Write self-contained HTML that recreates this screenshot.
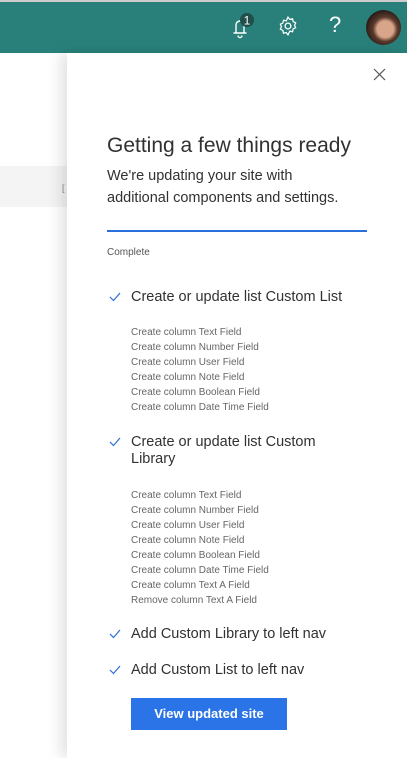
<!DOCTYPE html><html><head><style>
body{margin:0;width:407px;height:758px;overflow:hidden;position:relative;background:#fff;font-family:"Liberation Sans",sans-serif;color:#323130}
.a{position:absolute;white-space:nowrap}
.hd{position:absolute;left:0;top:2px;width:407px;height:51px;background:#29807b}
.s{font-size:10px;color:#666;line-height:15px}
.m{font-size:14.5px;color:#323130}
.ck{position:absolute;width:12px;height:10px}
</style></head><body>
<div class="a" style="left:0;top:0;width:407px;height:2px;background:#ccc"></div>
<div class="hd"></div>
<svg class="a" style="left:230px;top:12px" width="30" height="28" viewBox="0 0 30 28"><path d="M3.5 21h13M6 21v-8a4 4 0 0 1 8 0v8M8 23.5a2 2 0 0 0 4 0" fill="none" stroke="#fff" stroke-width="1.4"/><circle cx="17" cy="8" r="7" fill="#1f4e4b"/><text x="17" y="12.5" font-size="12" fill="#fff" text-anchor="middle" font-family="Liberation Sans">1</text></svg>
<svg class="a" style="left:278px;top:16px" width="20" height="20" viewBox="0 0 18 18"><circle cx="9" cy="9" r="2.6" fill="none" stroke="#fff" stroke-width="1.2"/><path d="M9 1l1.6 2.1 2.5-.6.5 2.5 2.3 1.1-1 2.2 1 2.2-2.3 1.2-.5 2.5-2.5-.6L9 17l-1.6-2.1-2.5.6-.5-2.5-2.3-1.2 1-2.2-1-2.2 2.3-1.1.5-2.5 2.5.6z" fill="none" stroke="#fff" stroke-width="1.1"/></svg>
<div class="a" style="left:329px;top:12px;font-size:22px;color:#fff">?</div>
<div class="a" style="left:366px;top:10px;width:35px;height:35px;border-radius:50%;background:radial-gradient(circle at 55% 55%,#d8a58a 0 30%,#5a3a2c 45%,#2a1d18 70%)"></div>
<div class="a" style="left:0;top:166px;width:67px;height:41px;background:#f4f4f4"></div>
<div class="a" style="left:62px;top:183px;font-size:9px;color:#888">[</div>
<div class="a" style="left:67px;top:53px;width:340px;height:705px;background:#fff;box-shadow:-6px 0 14px rgba(0,0,0,.12)"></div>
<svg class="a" style="left:373px;top:68px" width="13" height="13"><path d="M1 1l11 11M12 1L1 12" stroke="#555" stroke-width="1.2"/></svg>
<div class="a" style="left:107px;top:134px;font-size:21px;color:#323130">Getting a few things ready</div>
<div class="a" style="left:107px;top:166px;font-size:14.5px;line-height:21.5px;color:#323130">We're updating your site with<br>additional components and settings.</div>
<div class="a" style="left:107px;top:230px;width:260px;height:2px;background:#2b6fdc"></div>
<div class="a" style="left:107px;top:247px;font-size:10px;color:#555">Complete</div>

<svg class="ck" style="left:109px;top:292px"><path d="M1 5l3.5 3.5L11 1" fill="none" stroke="#2b6fdc" stroke-width="1.2"/></svg>
<div class="a m" style="left:131px;top:289px">Create or update list Custom List</div>
<div class="a s" style="left:131px;top:325px">Create column Text Field<br>Create column Number Field<br>Create column User Field<br>Create column Note Field<br>Create column Boolean Field<br>Create column Date Time Field</div>

<svg class="ck" style="left:109px;top:437px"><path d="M1 5l3.5 3.5L11 1" fill="none" stroke="#2b6fdc" stroke-width="1.2"/></svg>
<div class="a m" style="left:131px;top:434px;line-height:17px">Create or update list Custom<br>Library</div>
<div class="a s" style="left:131px;top:488px">Create column Text Field<br>Create column Number Field<br>Create column User Field<br>Create column Note Field<br>Create column Boolean Field<br>Create column Date Time Field<br>Create column Text A Field<br>Remove column Text A Field</div>

<svg class="ck" style="left:109px;top:629px"><path d="M1 5l3.5 3.5L11 1" fill="none" stroke="#2b6fdc" stroke-width="1.2"/></svg>
<div class="a m" style="left:131px;top:626px">Add Custom Library to left nav</div>
<svg class="ck" style="left:109px;top:665px"><path d="M1 5l3.5 3.5L11 1" fill="none" stroke="#2b6fdc" stroke-width="1.2"/></svg>
<div class="a m" style="left:131px;top:662px">Add Custom List to left nav</div>
<div class="a" style="left:131px;top:698px;width:156px;height:32px;background:#2b74e8;color:#fff;font-weight:bold;font-size:13px;line-height:32px;text-align:center">View updated site</div>
</body></html>
